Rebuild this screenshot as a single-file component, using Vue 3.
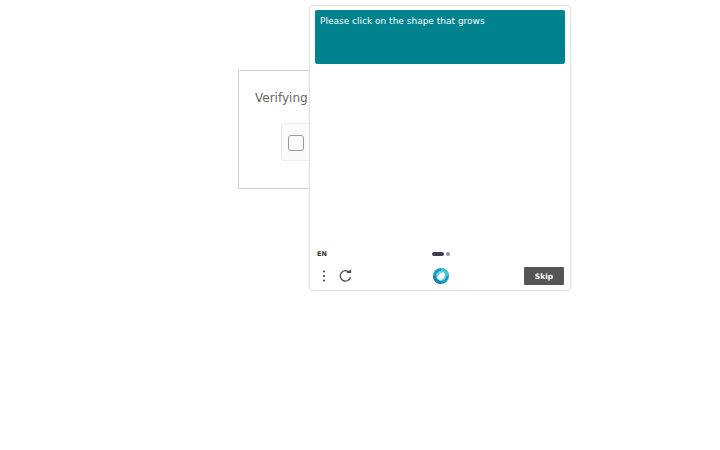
<script setup>
const title = 'Please click on the shape that grows'
</script>

<template>
  <div class="page">
    <section class="card">
      <h1 class="heading">Verifying you</h1>
      <div class="widget"><span class="box"></span></div>
    </section>
    <div class="popup">
      <div class="prompt">{{ title }}</div>
      <div class="stage"></div>
      <div class="meta">
        <span class="lang">EN</span>
        <div class="pager"><span class="pill"></span><span class="dot"></span></div>
      </div>
      <div class="footer">
        <div class="tools">
          <svg class="menu" width="4" height="12" viewBox="0 0 4 12"><circle cx="2" cy="1.5" r="1.1"/><circle cx="2" cy="6" r="1.1"/><circle cx="2" cy="10.5" r="1.1"/></svg>
          <svg class="refresh" width="13" height="14" viewBox="0 0 13 14" fill="none">
            <path d="M10.3 3.4A5.2 5.2 0 1 0 11.5 8" stroke="#4a4a4a" stroke-width="1.3"/>
            <path d="M7.1 3.9h5V0.2z" fill="#4a4a4a"/>
          </svg>
        </div>
        <svg class="logo" width="16" height="16" viewBox="0 0 16 16">
          <circle cx="8" cy="8" r="8" fill="#1e9ac4"/>
          <path d="M8 0a8 8 0 0 1 8 8h-3a5 5 0 0 0-5-5z" fill="#3cc6c8"/>
          <path d="M0 8a8 8 0 0 0 8 8v-3a5 5 0 0 1-5-5z" fill="#1a7cb8"/>
          <circle cx="8" cy="8" r="5" fill="#6fcde0"/>
          <path d="M3.8 9.4 7.4 4.6 8.4 5.8 10.4 3.6 12.2 6.4 10.8 10.6 7.4 12.4z" fill="#f2fbfc"/>
        </svg>
        <button class="skip">Skip</button>
      </div>
    </div>
  </div>
</template>

<style scoped>
.page {
  position: relative;
  height: 450px;
  padding-top: 70px;
  box-sizing: border-box;
  font-family: "DejaVu Sans", sans-serif;
  background: #fff;
}
.card {
  width: 244px;
  height: 119px;
  margin: 0 auto;
  box-sizing: border-box;
  border: 1px solid #d0d0d0;
  padding: 0 0 0 16px;
  overflow: hidden;
}
.heading {
  margin: 19px 0 0;
  font-size: 12px;
  font-weight: 400;
  line-height: 16px;
  color: #666;
  white-space: nowrap;
}
.widget {
  display: flex;
  align-items: center;
  width: 180px;
  height: 38px;
  margin: 17px 0 0 26px;
  padding-left: 6px;
  box-sizing: border-box;
  background: #fafafa;
  border: 1px solid #eeeeee;
  border-radius: 3px;
}
.box {
  width: 14px;
  height: 14px;
  margin-top: 1px;
  border: 1px solid #999;
  border-radius: 3px;
  background: #fff;
}
.popup {
  position: absolute;
  left: 309px;
  top: 5px;
  width: 262px;
  height: 286px;
  box-sizing: border-box;
  padding: 4px 5px 5px;
  display: flex;
  flex-direction: column;
  background: #fff;
  border: 1px solid #e0e0e0;
  border-radius: 4px;
  box-shadow: 0 0 2px rgba(0, 0, 0, 0.06);
}
.prompt {
  height: 54px;
  box-sizing: border-box;
  padding: 5px;
  background: #00838f;
  border-radius: 2px;
  color: #fff;
  font-size: 9px;
  line-height: 12px;
}
.stage {
  flex: 1;
}
.meta {
  display: flex;
  align-items: flex-start;
  height: 10px;
  margin-bottom: 7px;
  position: relative;
}
.lang {
  margin-left: 2px;
  font-size: 6.5px;
  line-height: 8px;
  font-weight: 700;
  color: #333;
}
.pager {
  position: absolute;
  left: 117px;
  top: 2px;
  display: flex;
  align-items: center;
  gap: 2px;
}
.pill {
  width: 12px;
  height: 4px;
  border-radius: 2px;
  background: #3d3f58;
}
.dot {
  width: 4px;
  height: 4px;
  border-radius: 50%;
  background: #8a8ca8;
}
.footer {
  display: flex;
  align-items: center;
  justify-content: space-between;
  height: 18px;
  position: relative;
}
.tools {
  display: flex;
  align-items: center;
  gap: 13px;
  margin-left: 7px;
}
.menu {
  fill: #4a4a4a;
}
.logo {
  position: absolute;
  left: 118px;
  top: 1px;
}
.skip {
  width: 40px;
  height: 18px;
  margin-right: 1px;
  padding: 0;
  border: none;
  border-radius: 1px;
  background: #555;
  color: #fff;
  font-family: "DejaVu Sans", sans-serif;
  font-size: 7.5px;
  font-weight: 700;
}
</style>
